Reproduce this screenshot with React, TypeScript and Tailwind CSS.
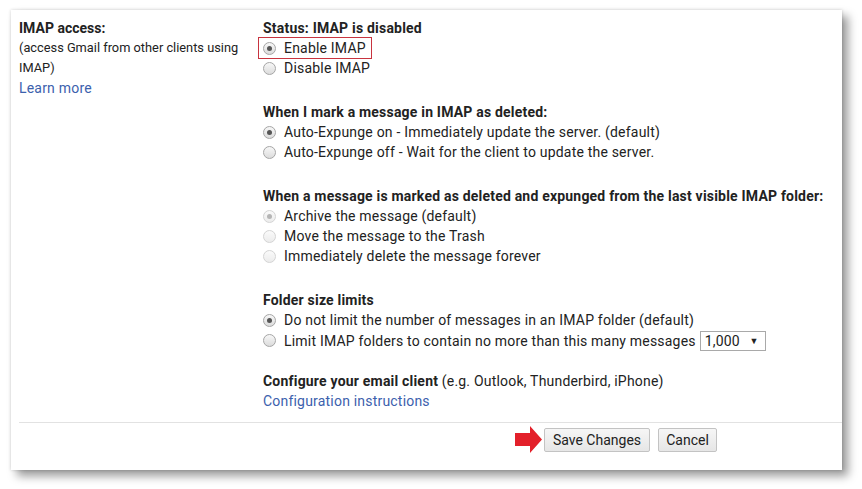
import React from 'react';

type RadioProps = { checked?: boolean; disabled?: boolean };

function Radio({ checked, disabled }: RadioProps) {
  return (
    <span
      className={
        disabled
          ? 'flex h-[13px] w-[13px] shrink-0 items-center justify-center rounded-full border border-[#d4d4d4] bg-gradient-to-b from-[#fafafa] to-[#ececec]'
          : 'flex h-[13px] w-[13px] shrink-0 items-center justify-center rounded-full border border-[#a6a6a6] bg-gradient-to-b from-[#f7f7f7] to-[#dcdcdc]'
      }
    >
      {checked && (
        <span className={disabled ? 'h-[5px] w-[5px] rounded-full bg-[#b5b5b5]' : 'h-[5px] w-[5px] rounded-full bg-[#555]'} />
      )}
    </span>
  );
}

function Option({ label, checked, disabled }: { label: React.ReactNode; checked?: boolean; disabled?: boolean }) {
  return (
    <div className="flex h-[20px] items-center">
      <Radio checked={checked} disabled={disabled} />
      <span className="ml-[8px] whitespace-nowrap">{label}</span>
    </div>
  );
}

function Heading({ children }: { children: React.ReactNode }) {
  return <div className="h-[20px] whitespace-nowrap font-bold">{children}</div>;
}

export default function App() {
  return (
    <div className="min-h-screen w-[862px] bg-white pl-[11px] pt-[10px] font-['Roboto',sans-serif] text-[14px] leading-[20px] tracking-[0.2px] text-[#222]">
      <div className="w-[831px] bg-white pl-[8px] pt-[8px] pb-[17px] shadow-[0_0_3px_rgba(0,0,0,0.18),6px_6px_9px_rgba(0,0,0,0.4)]">
        <div className="flex">
          {/* Left label column */}
          <div className="w-[244px] shrink-0">
            <div className="font-bold tracking-normal">IMAP access:</div>
            <div className="text-[12.8px] tracking-normal">(access Gmail from other clients using IMAP)</div>
            <a className="text-[#3c61ad]">Learn more</a>
          </div>

          {/* Settings column */}
          <div className="flex flex-col">
            <Heading>Status: IMAP is disabled</Heading>
            <div className="relative">
              <div className="pointer-events-none absolute left-[-5px] top-[-1px] h-[22px] w-[114px] border border-[#c8343f]" />
              <Option label="Enable IMAP" checked />
            </div>
            <Option label="Disable IMAP" />

            <div className="mt-[24px]">
              <Heading>When I mark a message in IMAP as deleted:</Heading>
              <Option label="Auto-Expunge on - Immediately update the server. (default)" checked />
              <Option label="Auto-Expunge off - Wait for the client to update the server." />
            </div>

            <div className="mt-[24px]">
              <Heading>When a message is marked as deleted and expunged from the last visible IMAP folder:</Heading>
              <Option label="Archive the message (default)" checked disabled />
              <Option label="Move the message to the Trash" disabled />
              <Option label="Immediately delete the message forever" disabled />
            </div>

            <div className="mt-[24px]">
              <Heading>Folder size limits</Heading>
              <Option label="Do not limit the number of messages in an IMAP folder (default)" checked />
              <div className="flex h-[21px] items-center">
                <Radio />
                <span className="ml-[8px] whitespace-nowrap">Limit IMAP folders to contain no more than this many messages</span>
                <div className="ml-[4px] flex h-[20px] w-[66px] items-center justify-between border border-[#a9a9a9] bg-white pl-[4px] pr-[6px]">
                  <span>1,000</span>
                  <span className="text-[9px]">▼</span>
                </div>
              </div>
            </div>

            <div className="mt-[20px]">
              <div className="whitespace-nowrap">
                <span className="font-bold">Configure your email client</span> (e.g. Outlook, Thunderbird, iPhone)
              </div>
              <a className="text-[#3c61ad]">Configuration instructions</a>
            </div>
          </div>
        </div>

        <div className="mt-[11px] border-t border-[#e2e2e2]" />

        <div className="mt-[3px] flex items-center pl-[496px]">
          <svg width="27" height="27" viewBox="0 0 27 27" className="mr-[2px]">
            <polygon points="0,7 15,7 15,0 27,13.5 15,27 15,20 0,20" fill="#e3202a" />
          </svg>
          <button className="h-[24px] w-[106px] rounded-[2px] border border-[#c3c3c3] bg-gradient-to-b from-[#f6f6f6] to-[#e6e6e6] text-[14px] tracking-normal text-[#222]">
            Save Changes
          </button>
          <button className="ml-[8px] h-[24px] w-[59px] rounded-[2px] border border-[#c3c3c3] bg-gradient-to-b from-[#f6f6f6] to-[#e6e6e6] text-[14px] tracking-normal text-[#222]">
            Cancel
          </button>
        </div>
      </div>
    </div>
  );
}
